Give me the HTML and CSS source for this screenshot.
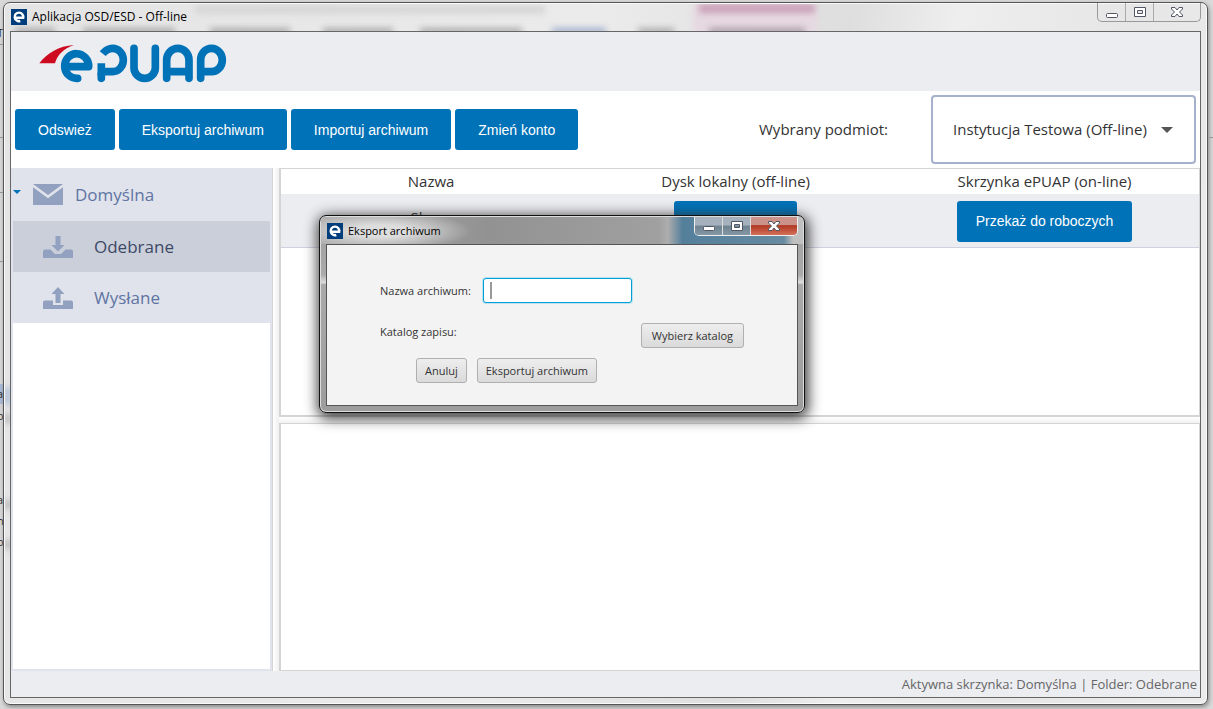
FILE: index.html
```html
<!DOCTYPE html>
<html lang="pl">
<head>
<meta charset="utf-8">
<title>Aplikacja OSD/ESD - Off-line</title>
<link rel="stylesheet" href="styles.css">
</head>
<body>
<div class="desktop">
  <div class="backdrop" aria-hidden="true">
    <i class="mark mark-blue"></i>
    <i class="rule rule-a"></i><i class="rule rule-b"></i><i class="rule rule-c"></i><i class="rule rule-d"></i><i class="rule rule-e"></i>
    <span class="letter letter-a">T</span><span class="letter letter-b">a</span><span class="letter letter-c">o</span><span class="letter letter-d">a</span><span class="letter letter-e">n</span><span class="letter letter-f">o</span>
  </div>
  <div class="window">
    <div class="glass" aria-hidden="true">
      <i class="haze haze-title"></i><i class="haze haze-pink"></i><i class="haze haze-pinktext"></i>
      <i class="haze haze-tab haze-t1"></i><i class="haze haze-tab haze-t2"></i><i class="haze haze-tab haze-t3"></i><i class="haze haze-tab haze-t4"></i><i class="haze haze-tab haze-t5"></i><i class="haze haze-tab haze-blue"></i><i class="haze haze-tab haze-t6"></i><i class="haze haze-tab haze-t7"></i>
      <i class="haze haze-side haze-s1"></i><i class="haze haze-side haze-s2"></i><i class="haze haze-side haze-s3"></i><i class="haze haze-side haze-s4"></i>
    </div>
    <header class="titlebar">
      <svg class="app-icon" viewBox="0 0 16 16"><rect width="16" height="16" fill="#003d7c"/><path d="M3.600 8.700H12.200A4.300 4.300 0 1 0 9.300 12" fill="none" stroke="#fff" stroke-width="2.400"/></svg>
      <span class="title">Aplikacja OSD/ESD - Off-line</span>
      <div class="caption-buttons">
        <button type="button" aria-label="Minimalizuj"><svg viewBox="0 0 28 18"><rect x="8.500" y="10.500" width="11" height="4" rx="1" fill="#fff" stroke="#535666"/></svg></button>
        <button type="button" aria-label="Maksymalizuj"><svg viewBox="0 0 28 18"><path d="M8.500 4.500h11v9h-11zM11.500 7.500v3h5v-3z" fill="#fff" fill-rule="evenodd" stroke="#535666"/></svg></button>
        <button type="button" class="wide" aria-label="Zamknij"><svg viewBox="0 0 28 18"><path d="M8.500 4.500h3.500l2 2.500 2-2.500h3.500v1.500l-3 3 3 3v1.500h-3.500l-2-2.500-2 2.500h-3.500v-1.500l3-3-3-3z" fill="#fff" stroke="#535666"/></svg></button>
      </div>
    </header>
    <div class="client">
      <div class="brand">
        <svg class="logo" viewBox="117 130 564 117" role="img" aria-label="ePUAP">
          <path d="M118 188C142 157 176 136 222 133C190 144 172 163 165 188Z" fill="#cd0a20"/>
          <g fill="none" stroke="#0072b8" stroke-width="23" stroke-linecap="round" stroke-linejoin="round">
            <path d="M264 198H202M266 198A36 37 0 1 0 233 233"/>
            <path stroke-linecap="butt" d="M308 159C318 147 327 143 338 143A32 35 0 0 1 338 213H304V225M304 188V225"/>
            <path d="M304 220V233"/>
            <path d="M402 143V201a32 32 0 0 0 64 0V143"/>
            <path d="M500 233V178a33.500 35 0 0 1 67 0V233M500 213H567"/>
            <path d="M602 233V178a32.500 35 0 1 1 32 35H602"/>
          </g>
        </svg>
      </div>
      <div class="toolbar">
        <button type="button" class="primary">Odswież</button>
        <button type="button" class="primary">Eksportuj archiwum</button>
        <button type="button" class="primary">Importuj archiwum</button>
        <button type="button" class="primary">Zmień konto</button>
        <label class="entity-label" for="entity">Wybrany podmiot:</label>
        <div class="entity">
          <select id="entity"><option>Instytucja Testowa (Off-line)</option></select>
        </div>
      </div>
      <main class="main">
        <nav class="sidebar">
          <a class="mailbox" href="#">
            <span class="twisty"></span>
            <svg class="envelope" viewBox="0 0 30 21"><path d="M0 0H30L15 11ZM0 3.200L15 14.200L30 3.200V21H0Z" fill="#92a1bf"/></svg>
            <span>Domyślna</span>
          </a>
          <a class="folder selected" href="#">
            <svg class="tray" viewBox="0 0 30 22"><path d="M12.500 0h5v9h4L15 15.500 8.500 9h4zM0 15.500q0-2 2-2h5.500l4.500 4.500h6l4.500-4.500h5.500q2 0 2 2V22H0z" fill="#92a1bf"/></svg>
            <span>Odebrane</span>
          </a>
          <a class="folder" href="#">
            <svg class="tray" viewBox="0 0 30 22"><path d="M15 0l6.500 7h-4V16h-5V7h-4zM0 15.500q0-2 2-2h8V18h10v-4.500h8q2 0 2 2V22H0z" fill="#92a1bf"/></svg>
            <span>Wysłane</span>
          </a>
        </nav>
        <div class="divider-v"></div>
        <div class="panes">
          <section class="pane list">
            <table class="items">
              <thead><tr><th>Nazwa</th><th>Dysk lokalny (off-line)</th><th>Skrzynka ePUAP (on-line)</th></tr></thead>
              <tbody><tr><td class="name">Skany</td><td><button type="button" class="primary local">Otwórz</button></td><td><button type="button" class="primary send">Przekaż do roboczych</button></td></tr></tbody>
            </table>
          </section>
          <div class="divider-h"></div>
          <section class="pane preview"></section>
        </div>
      </main>
      <footer class="status">Aktywna skrzynka: Domyślna | Folder: Odebrane</footer>
    </div>
  </div>

  <div class="dialog" role="dialog" aria-label="Eksport archiwum">
    <header class="dialog-bar">
      <svg class="app-icon" viewBox="0 0 16 16"><rect width="16" height="16" fill="#003d7c"/><path d="M3.600 8.700H12.200A4.300 4.300 0 1 0 9.300 12" fill="none" stroke="#fff" stroke-width="2.400"/></svg>
      <span class="dialog-title">Eksport archiwum</span>
      <div class="caption-buttons dark">
        <button type="button" aria-label="Minimalizuj"><svg viewBox="0 0 28 18"><rect x="8.500" y="9.500" width="11" height="4" rx="1" fill="#fff" stroke="#535666"/></svg></button>
        <button type="button" aria-label="Maksymalizuj"><svg viewBox="0 0 28 18"><path d="M8.500 4.500h11v9h-11zM11.500 7.500v3h5v-3z" fill="#fff" fill-rule="evenodd" stroke="#535666"/></svg></button>
        <button type="button" class="wide close" aria-label="Zamknij"><svg viewBox="0 0 28 18"><path d="M8.500 4.500h3.500l2 2.500 2-2.500h3.500v1.500l-3 3 3 3v1.500h-3.500l-2-2.500-2 2.500h-3.500v-1.500l3-3-3-3z" fill="#fff" stroke="#535666"/></svg></button>
      </div>
    </header>
    <form class="dialog-body">
      <div class="form-row">
        <label for="archive-name">Nazwa archiwum:</label>
        <span class="field"><input id="archive-name" type="text"><i class="caret"></i></span>
      </div>
      <div class="form-row catalog">
        <span class="catalog-label">Katalog zapisu:</span>
        <button type="button" class="plain pick">Wybierz katalog</button>
      </div>
      <div class="actions">
        <button type="button" class="plain">Anuluj</button>
        <button type="button" class="plain">Eksportuj archiwum</button>
      </div>
    </form>
  </div>
</div>
</body>
</html>
```
FILE: styles.css
```css
* { box-sizing: border-box; }
body {
  margin: 0;
  font-family: "Open Sans", "Noto Sans", sans-serif;
  font-size: 15px;
  color: #333;
}
button, input, select { font-family: inherit; font-size: inherit; color: inherit; margin: 0; }
a { color: inherit; text-decoration: none; }
svg { display: block; }

.desktop {
  position: relative;
  display: flex;
  min-height: 100vh;
  padding: 2px 5px 4px 3px;
  background: #d9d9d9;
  overflow: hidden;
}
.backdrop i, .glass i { position: absolute; }
.rule { left: 0; width: 4px; height: 1px; background: #999; }
.rule-a { top: 44px; }
.rule-b { top: 137px; }
.rule-c { top: 192px; }
.rule-d { top: 261px; }
.rule-e { left: auto; right: 0; top: 137px; }
.mark-blue { left: 0; top: 384px; width: 4px; height: 20px; background: #a9bad8; }
.letter { position: absolute; left: -3px; font-size: 11px; line-height: 16px; color: #222; }
.letter-a { top: 25px; }
.letter-b { top: 386px; }
.letter-c { top: 408px; }
.letter-d { top: 492px; }
.letter-e { top: 513px; }
.letter-f { top: 534px; }

.window {
  position: relative;
  flex: 1;
  display: flex;
  flex-direction: column;
  padding: 0 6px 6px;
  border: 1px solid #555;
  border-radius: 7px;
  background: linear-gradient(100deg, #e4e4e4, #ebebeb 45%, #dedede 64%, #eee 72%, #e6e6e6 85%, #ececec);
  box-shadow: inset 0 0 0 1px #fafafa, 1px 2px 4px #888;
}
.glass { position: absolute; inset: 1px; overflow: hidden; border-radius: 6px; }
.haze { filter: blur(3px); }
.haze-title { left: 190px; top: 1px; width: 350px; height: 9px; background: #d6d6d6; }
.haze-pink { left: 688px; top: 0; width: 124px; height: 30px; background: #e6d8e0; }
.haze-pinktext { left: 694px; top: 0; width: 116px; height: 9px; background: #c9a0b8; }
.haze-tab { top: 24px; height: 6px; background: #aaa; }
.haze-t1 { left: 10px; width: 40px; }
.haze-t2 { left: 78px; width: 92px; }
.haze-t3 { left: 205px; width: 80px; }
.haze-t4 { left: 318px; width: 70px; }
.haze-t5 { left: 415px; width: 102px; }
.haze-blue { left: 547px; width: 54px; background: #9fb0ce; }
.haze-t6 { left: 633px; width: 36px; }
.haze-t7 { left: 704px; width: 96px; background: #a89ca4; }
.haze-side { left: 0; width: 6px; height: 9px; background: #b0b0b0; }
.haze-s1 { top: 383px; height: 18px; background: #a9bad8; }
.haze-s2 { top: 410px; }
.haze-s3 { top: 496px; }
.haze-s4 { top: 536px; }

.titlebar {
  position: relative;
  display: flex;
  height: 28px;
  align-items: center;
  gap: 5px;
  padding-left: 1px;
  color: #000;
  font-size: 12px;
}
.app-icon { width: 16px; height: 16px; }
.title { line-height: 16px; }
.caption-buttons {
  display: flex;
  align-self: flex-start;
  margin-left: auto;
  height: 19px;
  border: 1px solid #999;
  border-top: 0;
  border-radius: 0 0 5px 5px;
  overflow: hidden;
}
.caption-buttons button {
  width: 28px;
  padding: 0;
  border: 0;
  border-right: 1px solid #aaa;
  background: transparent;
}
.caption-buttons .wide { width: 46px; border-right: 0; }
.caption-buttons svg { height: 18px; width: 28px; margin: 0 auto; }

.client {
  position: relative;
  flex: 1;
  display: flex;
  flex-direction: column;
  border: 1px solid #666;
  background: #fff;
}
.brand { padding: 12px 28px 8px; background: #ecedf1; }
.logo { width: 188px; height: 39px; }
.toolbar { display: flex; align-items: center; gap: 4px; padding: 4px; }
.primary {
  height: 41px;
  padding: 0 23px;
  border: 0;
  border-radius: 3px;
  background: #0072b8;
  color: #fff;
  font-family: "Liberation Sans", Arial, sans-serif;
  font-size: 14px;
}
.entity-label { margin-left: auto; margin-right: 39px; padding-bottom: 2px; }
.entity { position: relative; width: 265px; }
.entity::after {
  content: "";
  position: absolute;
  right: 23px;
  top: 32px;
  border: 6px solid transparent;
  border-top-color: #555;
  border-bottom: 0;
  pointer-events: none;
}
.entity select {
  width: 100%;
  height: 69px;
  padding: 0 20px 2px;
  border: 2px solid #a5b1cd;
  border-radius: 4px;
  background: #fff;
  appearance: none;
}

.main { flex: 1; display: flex; }
.sidebar {
  width: 261px;
  border: 2px solid #e0e3eb;
  border-top: 0;
  font-size: 17px;
  color: #5f74a3;
}
.mailbox, .folder { display: flex; align-items: center; background: #e0e3eb; }
.mailbox { height: 53px; gap: 12px; }
.twisty {
  border: 4px solid transparent;
  border-top-color: #0072b8;
  border-bottom: 0;
  margin-bottom: 6px;
}
.envelope { width: 30px; height: 21px; }
.folder { height: 51px; gap: 21px; padding-left: 30px; }
.selected { background: #cbcfda; color: #3d4a66; }
.tray { width: 30px; height: 22px; }
.divider-v {
  width: 7px;
  border-left: 1px solid #d4d4d4;
  background: linear-gradient(90deg, #fff, #f0f0f0);
}
.panes { flex: 1; display: flex; flex-direction: column; }
.pane { flex: 1 1 0; border: 1px solid #d4d4d4; border-left-width: 2px; }
.list { border-bottom-width: 2px; }
.divider-h { height: 6px; background: linear-gradient(#fff, #f0f0f0); }
.items { width: 100%; border-collapse: collapse; table-layout: fixed; text-align: center; }
.items th { height: 25px; padding: 0 0 2px; font-weight: normal; }
.items th:first-child { width: 32.7%; }
.items td { height: 53px; padding: 2px 0 0; background: #ecedf1; border-bottom: 1px solid #cdd1e0; }
.items .name { padding: 0 0 6px; }
.items .local { width: 123px; }
.items .send { padding: 0 19px; }
.status {
  padding: 3px;
  background: #ecedf1;
  color: #666;
  font-size: 13px;
  line-height: 20px;
  text-align: right;
}

.dialog {
  position: absolute;
  left: 319px;
  top: 215px;
  width: 486px;
  padding: 0 6px 6px;
  border: 1px solid #111;
  border-radius: 7px;
  background: linear-gradient(#a0a0a0, #aaa 30%, #ddd 34%, #aaa 35%, #9d9d9d);
  box-shadow: inset 0 0 0 1px #ddd, 1px 3px 14px 2px #333;
  font-size: 11px;
}
.dialog-bar {
  display: flex;
  align-items: center;
  gap: 5px;
  height: 27px;
  margin: 1px -5px 0;
  padding: 0 5px 0 6px;
  color: #000;
  border-radius: 5px 5px 0 0;
  background:
    radial-gradient(ellipse 90px 20px at 60px 14px, #ddd 30%, transparent),
    linear-gradient(90deg, #a8a8a8, #929292 35%, #a0a0a0 70%, #adadad 72%, #547f9b 75%, #668ba2 96%, #c0c0c0 98%);
}
.dark { height: 19px; border-color: #eee; }
.dark button { background: linear-gradient(#a5b2bd 45%, #6f8290 50%, #8397a4); border-right-color: #ddd; }
.dark .close { background: linear-gradient(#ca9288 42%, #b13823 48%, #d3705a); }
.dialog-body {
  padding: 33px 53px 22px;
  border: 1px solid #555;
  background: #f3f3f3;
}
.form-row { display: flex; align-items: center; gap: 10px; }
.form-row label { width: 93px; white-space: nowrap; }
.field { position: relative; width: 149px; }
.field input {
  display: block;
  width: 100%;
  height: 25px;
  padding: 0 7px;
  border: 1px solid #039ed3;
  border-radius: 3px;
  background: #fff;
  box-shadow: 0 0 0 1px #b9e3f0;
  outline: 0;
}
.caret { position: absolute; left: 7px; top: 4px; width: 2px; height: 17px; background: #999; }
.catalog { justify-content: space-between; margin-top: 20px; }
.catalog-label { align-self: flex-start; line-height: 18px; }
.plain {
  height: 25px;
  padding: 0 8px;
  border: 1px solid #b0b0b0;
  border-radius: 3px;
  background: linear-gradient(#eee, #dadada);
}
.plain.pick { padding: 0 10px; }
.actions { display: flex; gap: 10px; margin-top: 10px; padding-left: 36px; }
```
